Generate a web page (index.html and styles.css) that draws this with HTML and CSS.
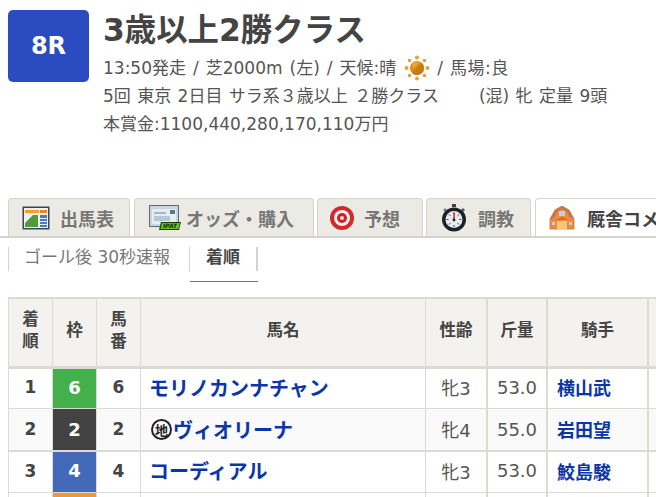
FILE: index.html
```html
<!DOCTYPE html>
<html lang="ja">
<head>
    <meta charset="UTF-8">
    <title>3歳以上2勝クラス</title>
    <link rel="stylesheet" href="styles.css">
</head>
<body>
<div class="raceHead">
    <div class="raceNum">8R</div>
    <div class="raceInfo">
        <h1>3歳以上2勝クラス</h1>
        <p class="condLine">13:50発走 / 芝2000m (左) / 天候:晴
            <svg class="sun" width="26" height="26" viewBox="0 0 26 26">
                <circle cx="13" cy="13" r="7" fill="#d98a17"/>
                <path d="M8 18 L18 8 A7 7 0 0 1 8 18Z" fill="#c87a10"/>
                <path d="M8 9 A7 7 0 0 1 16 7 L9 14Z" fill="#eaa63a"/>
                <g fill="#e3a040">
                    <circle cx="13" cy="2.5" r="2"/><circle cx="13" cy="23.5" r="2"/>
                    <circle cx="2.5" cy="13" r="2"/><circle cx="23.5" cy="13" r="2"/>
                    <circle cx="5.5" cy="5.5" r="1.8"/><circle cx="20.5" cy="5.5" r="1.8"/>
                    <circle cx="5.5" cy="20.5" r="1.8"/><circle cx="20.5" cy="20.5" r="1.8"/>
                </g>
            </svg>
            / <span class="baba">馬場:良</span></p>
        <p>5回 東京 2日目 サラ系３歳以上 ２勝クラス<span class="gapL">(混) 牝 定量 9頭</span></p>
        <p>本賞金:1100,440,280,170,110万円</p>
    </div>
</div>

<div class="tabs">
    <div class="tab tabCard">
        <svg width="28" height="24" viewBox="0 0 28 24">
            <rect x="0.5" y="0.5" width="27" height="23" fill="#33475f"/>
            <rect x="2" y="2" width="24" height="20" fill="#f4f1e6"/>
            <rect x="3" y="4" width="14" height="3" fill="#f0a030"/>
            <rect x="18" y="4" width="7" height="3" fill="#e8812a"/>
            <path d="M3 21 L3 17 L11 9 L16 9 L16 21Z" fill="#4f9a3a"/>
            <rect x="18" y="9" width="7" height="12" fill="#4a7cbd"/>
            <path d="M18 12.5h7M18 15.5h7M18 18.5h7" stroke="#e4ecf5"/>
        </svg>
        <span>出馬表</span>
    </div>
    <div class="tab tabOdds">
        <svg width="32" height="26" viewBox="0 0 32 26">
            <rect x="0.5" y="0.5" width="29" height="21" fill="#c9d6df" stroke="#5c6a74"/>
            <rect x="3" y="4" width="24" height="15" fill="#e6eef3"/>
            <rect x="5" y="7" width="12" height="2" fill="#9fb6c6"/>
            <rect x="5" y="11" width="16" height="5" fill="#b4c8d6"/>
            <rect x="21" y="5" width="5" height="4" fill="#5b7488"/>
            <path d="M12 17 H32 L30 25 H10Z" fill="#1f3a10"/>
            <path d="M13 18 H31 L29.5 24 H11.5Z" fill="#6bc21e"/>
            <text class="ipat" x="21" y="23.4" text-anchor="middle">IPAT</text>
        </svg>
        <span>オッズ・購入</span>
    </div>
    <div class="tab tabYoso">
        <svg width="24" height="24" viewBox="0 0 24 24">
            <circle cx="12" cy="12" r="12" fill="#d02a2c"/>
            <circle cx="12" cy="12" r="8" fill="#f8eeee"/>
            <circle cx="12" cy="12" r="5" fill="#cc2226"/>
            <circle cx="12" cy="12" r="2" fill="#f4dcdc"/>
        </svg>
        <span>予想</span>
    </div>
    <div class="tab tabTrain">
        <svg width="26" height="28" viewBox="0 0 26 28">
            <rect x="11" y="0" width="4" height="3" fill="#3a4048"/>
            <path d="M3 5 L6 8" stroke="#7a8a94" stroke-width="3"/>
            <path d="M23 5 L20 8" stroke="#3f6a60" stroke-width="3"/>
            <circle cx="13" cy="15.5" r="12" fill="#1b2128"/>
            <circle cx="13" cy="15.5" r="8.5" fill="#e8ecef"/>
            <path d="M13 8v2M13 21v2M5.5 15.5h2M18.5 15.5h2M8 10.5l1.4 1.4M18 10.5l-1.4 1.4M8 20.5l1.4-1.4M18 20.5l-1.4-1.4" stroke="#3a4048"/>
            <rect x="12.3" y="9" width="1.5" height="7" fill="#d8201c"/>
            <circle cx="13" cy="16" r="1.4" fill="#1b2128"/>
        </svg>
        <span>調教</span>
    </div>
    <div class="tab tabBarn active">
        <svg width="26" height="24" viewBox="0 0 26 24">
            <path d="M1 23 L1 13 L6 4 L13 0 L20 4 L25 13 L25 23Z" fill="#f08a3c" stroke="#b0703a" stroke-width="0.7"/>
            <path d="M1 13 L6 4 L13 0 L20 4 L25 13 L21 12 L18 6 L13 3 L8 6 L5 12Z" fill="#c8764a"/>
            <rect x="10" y="5" width="6" height="5" fill="#b9d0e6"/>
            <path d="M6 14 L13 11 L20 14Z" fill="#e2652c"/>
            <rect x="8" y="15" width="10" height="8" fill="#f7c873"/>
            <rect x="3" y="16" width="3" height="3" fill="#b9d0e6"/>
            <rect x="20" y="16" width="3" height="3" fill="#b9d0e6"/>
        </svg>
        <span>厩舎コメント</span>
    </div>
</div>

<div class="subNav">
    <div class="subItem">ゴール後 30秒速報</div>
    <div class="subItem current">着順</div>
</div>

<table class="result">
    <colgroup>
        <col class="cSmall"><col class="cSmall"><col class="cSmall">
        <col class="cName"><col class="cAge"><col class="cKg"><col class="cJockey"><col class="cRest">
    </colgroup>
    <thead>
        <tr>
            <th>着<br>順</th><th>枠</th><th>馬<br>番</th><th>馬名</th><th>性齢</th><th>斤量</th><th>騎手</th><th></th>
        </tr>
    </thead>
    <tbody>
        <tr class="r1">
            <td class="num">1</td><td class="waku w6">6</td><td class="num">6</td>
            <td class="name"><a>モリノカンナチャン</a></td>
            <td class="plain">牝3</td><td class="plain">53.0</td>
            <td class="jockey"><a>横山武</a></td><td></td>
        </tr>
        <tr class="r2">
            <td class="num">2</td><td class="waku w2">2</td><td class="num">2</td>
            <td class="name"><span class="chi">地</span><a>ヴィオリーナ</a></td>
            <td class="plain">牝4</td><td class="plain">55.0</td>
            <td class="jockey"><a>岩田望</a></td><td></td>
        </tr>
        <tr class="r3">
            <td class="num">3</td><td class="waku w4">4</td><td class="num">4</td>
            <td class="name"><a>コーディアル</a></td>
            <td class="plain">牝3</td><td class="plain">53.0</td>
            <td class="jockey"><a>鮫島駿</a></td><td></td>
        </tr>
        <tr class="r4">
            <td></td><td class="waku w7"></td><td></td><td></td><td></td><td></td><td></td><td></td>
        </tr>
    </tbody>
</table>
</body>
</html>
```

FILE: styles.css
```css
*{
    margin: 0;
    padding: 0;
    box-sizing: border-box;
}
html, body{
    height: 497px;
    overflow: hidden;
}
body{
    background-color: #fff;
    color: #555;
    font-family: "DejaVu Sans", "Noto Sans CJK JP", sans-serif;
    font-size: 17px;
}
.raceHead{
    display: flex;
    gap: 14px;
    padding: 10px 0 0 8px;
    height: 198px;
}
.raceNum{
    width: 81px;
    height: 72px;
    background-color: #2b4cc0;
    border-radius: 5px;
    color: #fff;
    font-size: 24px;
    font-weight: bold;
    display: flex;
    align-items: center;
    justify-content: center;
}
.raceInfo h1{
    font-size: 31.4px;
    line-height: 40px;
    color: #444;
    margin-bottom: 5px;
}
.raceInfo p{
    line-height: 27.8px;
    height: 27.8px;
    white-space: nowrap;
    word-spacing: 1px;
}
.raceInfo .condLine{
    word-spacing: 1.6px;
}
.sun{
    vertical-align: middle;
    margin: -6px 0 -4px 1px;
}
.baba{
    letter-spacing: 0.5px;
}
.gapL{
    margin-left: 40px;
}
.tabs{
    display: flex;
    gap: 4px;
    padding-left: 8px;
    height: 40px;
    border-bottom: 2px solid #d4d3cd;
    white-space: nowrap;
    overflow: hidden;
}
.tab{
    display: flex;
    align-items: center;
    background-color: #eceae5;
    border: 1px solid #d4d3cd;
    border-bottom: none;
    border-radius: 4px 4px 0 0;
    color: #777;
    font-size: 18px;
    font-weight: bold;
    flex-shrink: 0;
}
.tabCard{ width: 122px; padding-left: 13px; gap: 10px; }
.tabOdds{ width: 180px; padding-left: 14px; gap: 5px; }
.tabYoso{ width: 106px; padding-left: 12px; gap: 10px; margin-left: -1px; }
.tabTrain{ width: 105px; padding-left: 14px; gap: 11px; margin-left: -1px; }
.tabBarn{ padding-left: 13px; gap: 12px; }
.tab.active{
    background-color: #fff;
    color: #444;
}
.ipat{
    font-size: 6px;
    font-weight: bold;
    font-style: italic;
    fill: #12300a;
}
.subNav{
    display: flex;
    padding: 9px 0 0 8px;
    height: 59px;
}
.subItem{
    width: 181px;
    height: 24px;
    line-height: 21px;
    padding-left: 15px;
    border-left: 1px solid #d4d3cd;
    color: #777;
    white-space: nowrap;
}
.subItem.current{
    position: relative;
    width: 69px;
    padding: 0;
    text-align: center;
    font-weight: bold;
    color: #444;
    border-right: 2px solid #d4d3cd;
}
.subItem.current::after{
    content: "";
    position: absolute;
    left: 0;
    right: -2px;
    top: 34px;
    border-bottom: 1px solid #77766c;
}
.result{
    margin-left: 8px;
    width: 800px;
    table-layout: fixed;
    border-collapse: separate;
    border-spacing: 0;
    border-top: 2px solid #dcdbd3;
    border-left: 1px solid #dcdbd3;
}
.cSmall{ width: 44px; }
.cName{ width: 285px; }
.cAge{ width: 62px; }
.cKg{ width: 60px; }
.cJockey{ width: 101px; }
th, td{
    border-right: 1px solid #dcdbd3;
    border-bottom: 1px solid #dcdbd3;
    text-align: center;
    padding: 0;
}
th:nth-child(n+5), td:nth-child(n+5){
    border-right-width: 2px;
}
th{
    height: 70px;
    padding-bottom: 3px;
    background-color: #f3f2ee;
    border-bottom-width: 3px;
    color: #444;
    font-size: 16.5px;
    line-height: 22px;
}
.r1 td{ height: 40px; padding-bottom: 3px; }
.r2 td{ height: 43px; padding-bottom: 1px; background-color: #fafafa; border-bottom-width: 2px; }
.r3 td{ height: 41px; padding-bottom: 3px; }
.r4 td{ height: 41px; }
.result td.num{
    font-size: 17px;
    font-weight: bold;
    color: #444;
}
.result td.waku{
    color: #fff;
    font-size: 18px;
    font-weight: bold;
}
.result td.w6{ background-color: #44b04c; }
.result td.w2{ background-color: #424242; }
.result td.w4{ background-color: #4169b8; }
.result td.w7{ background-color: #ee9738; }
a{
    color: #0b35a8;
    font-weight: bold;
}
.name{
    text-align: left;
    padding-left: 8px;
    font-size: 20px;
    white-space: nowrap;
}
.name a{
    vertical-align: middle;
}
.chi{
    display: inline-flex;
    align-items: center;
    justify-content: center;
    width: 21px;
    height: 21px;
    margin: 0 1px 0 2px;
    border: 2px solid #222;
    border-radius: 50%;
    color: #222;
    font-size: 13px;
    font-weight: bold;
    vertical-align: middle;
}
.plain{
    font-size: 18px;
}
.jockey{
    text-align: left;
    padding-left: 9px;
    font-size: 18px;
}
```
